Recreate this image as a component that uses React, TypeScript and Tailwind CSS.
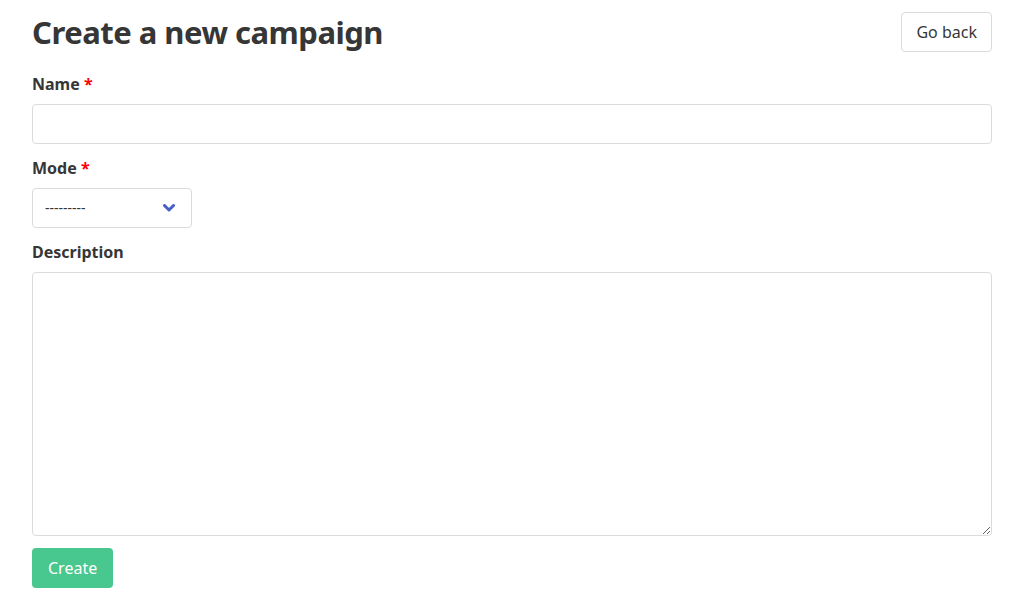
const Label = ({ text, required }: { text: string; required?: boolean }) => (
  <label className="block mb-2 text-base leading-6 font-bold text-[#363636]">
    {text}
    {required && <span className="text-[#ff0000]"> *</span>}
  </label>
);

export default function App() {
  return (
    <div className="min-h-screen bg-white font-['Noto_Sans','Open_Sans',sans-serif] text-[#363636]">
      <div className="pl-8 pr-[33px] pt-3">
        <div className="flex items-start justify-between mb-5">
          <h1 className="text-[31px] leading-10 font-bold tracking-[-0.5px] text-[#363636]">
            Create a new campaign
          </h1>
          <button className="h-10 px-[14px] rounded border border-[#dbdbdb] bg-white text-base text-[#363636]">
            Go back
          </button>
        </div>

        <div className="mb-3">
          <Label text="Name" required />
          <input className="block w-full h-10 px-3 rounded border border-[#dbdbdb] bg-white outline-none" />
        </div>

        <div className="mb-3">
          <Label text="Mode" required />
          <div className="relative w-[160px] h-10 rounded border border-[#dbdbdb] bg-white flex items-center px-3">
            <span className="text-sm text-[#363636]">---------</span>
            <svg
              className="absolute right-[16px] top-1/2 -translate-y-1/2"
              width="12"
              height="8"
              viewBox="0 0 12 8"
              fill="none"
            >
              <path d="M1.5 1.5 L6 6 L10.5 1.5" stroke="#485fc7" strokeWidth="3" strokeLinecap="round" strokeLinejoin="round" />
            </svg>
          </div>
        </div>

        <div className="mb-3">
          <Label text="Description" />
          <textarea className="block w-full h-[264px] px-3 py-2 rounded border border-[#dbdbdb] bg-white outline-none resize-y" />
        </div>

        <button className="h-10 px-4 rounded bg-[#48c78e] text-white text-base">Create</button>
      </div>
    </div>
  );
}
